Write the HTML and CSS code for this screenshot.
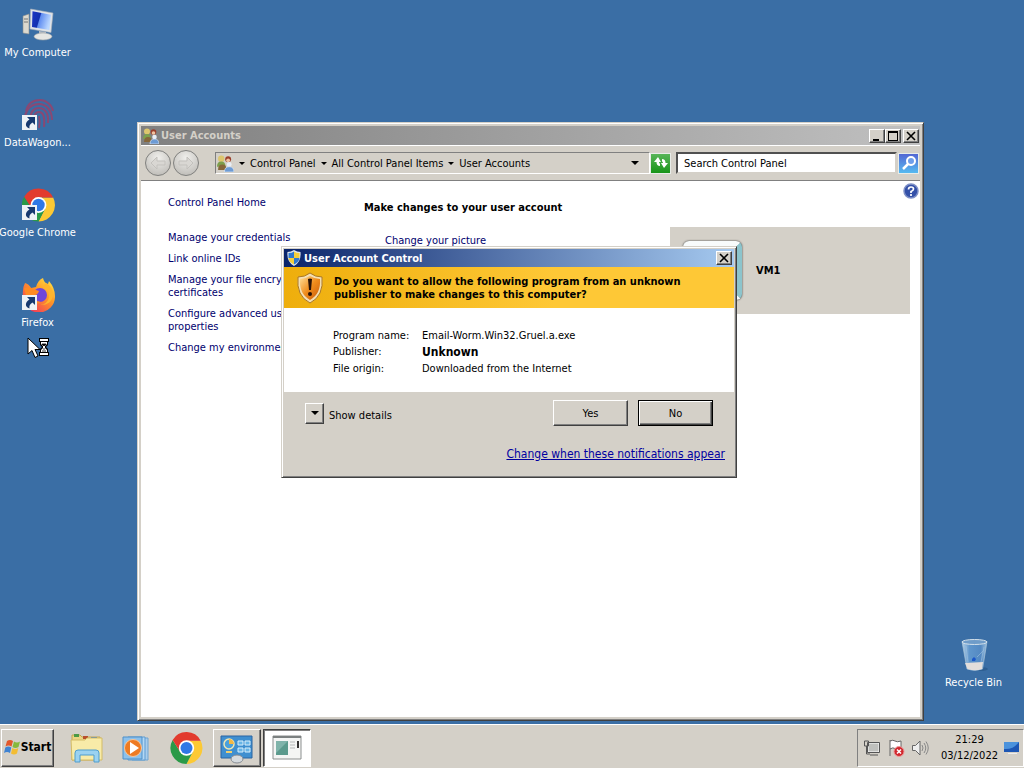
FILE: index.html
```html
<!DOCTYPE html>
<html lang="en">
<head>
    <meta charset="UTF-8">
    <meta name="viewport" content="width=device-width, initial-scale=1.0">
    <title>Desktop</title>
    <link rel="stylesheet" href="styles.css">
</head>
<body>
    <!-- shared drawings -->
    <svg class="defs" aria-hidden="true">
        <defs>
            <linearGradient id="screen" x1="0" y1="0" x2="1" y2="0.3">
                <stop offset="0" stop-color="#1b35c4"/><stop offset="0.45" stop-color="#1230b0"/>
                <stop offset="0.5" stop-color="#5f8cf0"/><stop offset="1" stop-color="#b9d6ff"/>
            </linearGradient>
            <linearGradient id="fox" x1="1" y1="0" x2="0.2" y2="1">
                <stop offset="0" stop-color="#fff04a"/><stop offset="0.45" stop-color="#ff9a26"/><stop offset="1" stop-color="#f0315f"/>
            </linearGradient>
            <linearGradient id="bin" x1="0" y1="0" x2="1" y2="0">
                <stop offset="0" stop-color="#b4d0e6"/><stop offset="0.3" stop-color="#5f96cc"/><stop offset="0.75" stop-color="#5489c2"/><stop offset="1" stop-color="#9fc2de"/>
            </linearGradient>
            <linearGradient id="gold" x1="0" y1="0" x2="1" y2="1">
                <stop offset="0" stop-color="#ffe09a"/><stop offset="0.5" stop-color="#ef8c1c"/><stop offset="1" stop-color="#c85a0c"/>
            </linearGradient>
            <radialGradient id="orb" cx="0.5" cy="0.3" r="0.8">
                <stop offset="0" stop-color="#f0efec"/><stop offset="1" stop-color="#b9b7b2"/>
            </radialGradient>
            <symbol id="chrome" viewBox="0 0 48 48">
                <path d="M24 13H45.300A24 24 0 0 1 24 48L33.500 29.500Z" fill="#fcc934"/>
                <path d="M14.500 29.500 3.200 12A24 24 0 0 0 24 48L33.500 29.500Z" fill="#2a9a48"/>
                <path d="M24 13H45.300A24 24 0 0 0 3.200 12L14.500 29.500Z" fill="#e23b2e"/>
                <circle cx="24" cy="24" r="11.500" fill="#fff"/>
                <circle cx="24" cy="24" r="9" fill="#2f78e6"/>
            </symbol>
            <symbol id="shortcut" viewBox="0 0 15 15">
                <path d="M0 0h15v15H0z" fill="#eef2f6"/>
                <path d="M5 2h8v8l-2.500-2.500C8 9 7 10.500 7.500 13.500 2.500 12 3 7 7.500 4.500Z" fill="#17396f"/>
            </symbol>
            <symbol id="people" viewBox="0 0 16 16">
                <circle cx="4" cy="3.500" r="3" fill="#dcc66e"/>
                <path d="M0 11q0-5 4-5t4 5Z" fill="#7d9f4c"/>
                <circle cx="10.500" cy="4" r="2.800" fill="#9a3f2b"/>
                <circle cx="10.500" cy="5" r="1.800" fill="#efc2a0"/>
                <path d="M1 14q0-5 4-5t4 5Z" fill="#86673a"/>
                <circle cx="11.500" cy="9" r="2.300" fill="#e8eef6"/>
                <path d="M7 16q0-5 4.500-5t4.500 5Z" fill="#6d9bd4" stroke="#e4ecf5" stroke-width="0.600"/>
            </symbol>
        </defs>
    </svg>

    <main class="desktop">
        <nav class="icons">
            <a href="#" class="icon">
                <svg width="34" height="34" viewBox="0 0 34 34">
                    <path d="M2 8 8 6v20l-6-1Z" fill="#dcd9cf" stroke="#8b8d8c" stroke-width="0.600"/>
                    <path d="M3 11h4M3 14h4" stroke="#777"/>
                    <path d="M9.500 1 32 5 30 24.500 9 21Z" fill="#dfe3e8" stroke="#a8afb7" stroke-width="0.600"/>
                    <path d="M11.500 3.200 30 6.700 28.300 22 11 19Z" fill="url(#screen)"/>
                    <path d="m18 23 7 1v4h-7Z" fill="#b9bec4"/>
                    <ellipse cx="22" cy="28.500" rx="9" ry="3.500" fill="#e6e6e3" stroke="#9ea2a6" stroke-width="0.600"/>
                </svg>
                <span>My Computer</span>
            </a>
            <a href="#" class="icon">
                <svg width="34" height="34" viewBox="0 0 34 34">
                    <g fill="none" stroke="#9c4068" stroke-width="2" opacity="0.800">
                        <path d="M5 13C7 5 13 2 19 2s12 5 13 11"/>
                        <path d="M4 18C6 10 11 6 18 6s13 6 13 16"/>
                        <path d="M10 20c-1-6 3-10 8-10s10 4 9 15"/>
                        <path d="M14 24c-2-6 0-10 4-10s6 4 5 15"/>
                        <path d="M18 18c1 4 1 8 0 12"/>
                    </g>
                    <use href="#shortcut" x="1" y="17" width="15" height="15"/>
                </svg>
                <span>DataWagon...</span>
            </a>
            <a href="#" class="icon">
                <svg width="34" height="34" viewBox="0 0 34 34">
                    <use href="#chrome" x="1" y="0" width="33" height="34"/>
                    <use href="#shortcut" x="1" y="17" width="15" height="15"/>
                </svg>
                <span>Google Chrome</span>
            </a>
            <a href="#" class="icon">
                <svg width="34" height="34" viewBox="0 0 34 34">
                    <path d="M4 5q4 1 6 5l5-1Q17 2 22 0q1 5 5 6l1-3q6 7 6 15a16 16 0 0 1-32 1Q1 10 4 5Z" fill="url(#fox)"/>
                    <circle cx="19" cy="17" r="7" fill="#7046d8"/>
                    <path d="M3 10q6-2 9 1l6 2q-1 4-6 5 1 5 8 6-9 5-14-3Z" fill="#ff8a22"/>
                    <path d="M21 9q8 2 7 10-1 7-9 8 12 0 13-10Q32 9 25 5Z" fill="#ffb52c"/>
                    <use href="#shortcut" x="1" y="17" width="15" height="15"/>
                </svg>
                <span>Firefox</span>
            </a>
        </nav>

        <a href="#" class="icon recycle">
            <svg width="34" height="34" viewBox="0 0 34 34">
                <ellipse cx="22" cy="31" rx="9" ry="2" fill="#214f80" opacity="0.500"/>
                <path d="M5 3.500h25L25.500 31q-8 3-15.500 0Z" fill="url(#bin)" stroke="#a9c4da" stroke-width="0.700"/>
                <path d="m8 25 18-1-1 7q-7 2.500-14.500 0Z" fill="#e3dedb"/>
                <ellipse cx="17.500" cy="4" rx="12.500" ry="2.500" fill="#6f9cc9" stroke="#d4e1ea"/>
                <path d="m9 8 2 16M27 9l-3 15M20 19l7-7" stroke="#a5c6e2" stroke-width="0.800" opacity="0.700"/>
                <path d="m15 21 2-2 2 2-1 2h-3Z" fill="#1b57c8"/>
            </svg>
            <span>Recycle Bin</span>
        </a>

        <section class="window accounts">
            <header class="titlebar inactive">
                <svg width="16" height="16"><use href="#people"/></svg>
                <h1>User Accounts</h1>
                <div class="winbtns">
                    <button class="winbtn" aria-label="Minimize"><svg width="12" height="10"><path d="M2 8h6v2H2z"/></svg></button>
                    <button class="winbtn" aria-label="Maximize"><svg width="12" height="10"><path d="M1 0h10v10H1zM2 2v7h8V2z" fill-rule="evenodd"/></svg></button>
                    <button class="winbtn close" aria-label="Close"><svg width="12" height="10"><path d="m2 1 8 8M10 1 2 9" stroke="#000" stroke-width="1.600"/></svg></button>
                </div>
            </header>
            <div class="toolbar">
                <div class="orbs">
                    <button class="orb" aria-label="Back"><svg width="28" height="28"><circle cx="14" cy="14" r="12.500" fill="url(#orb)" stroke="#80807e"/><path d="m13 8-6 6 6 6v-4h8v-4h-8Z" fill="#d9d7d3" stroke="#c3c1bd"/></svg></button>
                    <button class="orb" aria-label="Forward"><svg width="28" height="28"><circle cx="14" cy="14" r="12.500" fill="url(#orb)" stroke="#80807e"/><path d="m15 8 6 6-6 6v-4H7v-4h8Z" fill="#d9d7d3" stroke="#c3c1bd"/></svg></button>
                </div>
                <div class="address">
                    <svg width="17" height="17"><use href="#people"/></svg>
                    <i class="arrow"></i><a href="#">Control Panel</a>
                    <i class="arrow"></i><a href="#">All Control Panel Items</a>
                    <i class="arrow"></i><a href="#">User Accounts</a>
                    <button class="history" aria-label="Previous locations"><i class="arrow big"></i></button>
                </div>
                <button class="refresh" aria-label="Refresh"><svg width="18" height="18"><path d="M6 3 2 8h2.500q0 4 3.500 4V9.500q-1 0-1-1.500H9Z M12 14l4-5h-2.500q0-4-3.500-4v2.500q1 0 1 1.500H9Z" fill="#fff"/></svg></button>
                <input class="search" type="text" aria-label="Search" placeholder="Search Control Panel">
                <button class="find" aria-label="Find"><svg width="18" height="18"><circle cx="11" cy="7" r="4" fill="#6f9eea" stroke="#fff" stroke-width="2"/><path d="m8 10-5 5" stroke="#fff" stroke-width="2.500"/></svg></button>
            </div>
            <div class="content">
                <nav class="tasks">
                    <a href="#" class="home">Control Panel Home</a>
                    <a href="#">Manage your credentials</a>
                    <a href="#">Link online IDs</a>
                    <a href="#">Manage your file encryption certificates</a>
                    <a href="#">Configure advanced user profile properties</a>
                    <a href="#">Change my environment variables</a>
                </nav>
                <div class="account">
                    <button class="help" aria-label="Help"><svg width="16" height="16"><circle cx="8" cy="8" r="7" fill="#3350a8" stroke="#7d8fc6" stroke-width="1.500"/><path d="M5.500 6.500Q5.500 4 8 4t2.500 2q0 1.500-2.500 2.500v1.500M8 11v2" fill="none" stroke="#fff" stroke-width="1.700"/></svg></button>
                    <h2>Make changes to your user account</h2>
                    <div class="row">
                        <a href="#">Change your picture</a>
                        <div class="user">
                            <div class="photo"></div>
                            <strong>VM1</strong>
                        </div>
                    </div>
                </div>
            </div>
        </section>

        <section class="window uac" role="dialog">
            <header class="titlebar active">
                <svg width="16" height="16" viewBox="0 0 16 16">
                    <path d="M8 0q3 2 6.500 2 1 10-6.500 14Q.500 12 1.500 2 5 2 8 0Z" fill="#dfe7ee"/>
                    <path d="M8 1.500v6.500H2.500V3q3.500 0 5.500-1.500Z" fill="#2f78cf"/><path d="M8 1.500Q10 3 13.500 3v5H8Z" fill="#f4cf3a"/>
                    <path d="M2.500 8H8v6.500Q3 12 2.500 8Z" fill="#f4cf3a"/><path d="M8 8h5.500q-.500 4-5.500 6.500Z" fill="#2f78cf"/>
                </svg>
                <h1>User Account Control</h1>
                <button class="winbtn" aria-label="Close"><svg width="12" height="10"><path d="m2 1 8 8M10 1 2 9" stroke="#000" stroke-width="1.600"/></svg></button>
            </header>
            <div class="banner">
                <svg width="28" height="32" viewBox="0 0 28 32">
                    <path d="M14 1q5 4 12 4 2 19-12 26Q0 24 2 5q7 0 12-4Z" fill="#f3dfb4" stroke="#a97726"/>
                    <path d="M14 4q5 3 10 3 1 15-10 21Q3 22 4 7q5 0 10-3Z" fill="url(#gold)"/>
                    <path d="M12 7q2-1 4 0l-1 11h-2Z" fill="#2a1206"/><circle cx="14" cy="22" r="2" fill="#2a1206"/>
                </svg>
                <p>Do you want to allow the following program from an unknown publisher to make changes to this computer?</p>
            </div>
            <dl class="facts">
                <dt>Program name:</dt><dd>Email-Worm.Win32.Gruel.a.exe</dd>
                <dt>Publisher:</dt><dd><strong>Unknown</strong></dd>
                <dt>File origin:</dt><dd>Downloaded from the Internet</dd>
            </dl>
            <footer class="actions">
                <div class="choices">
                    <button class="expand" id="details" aria-labelledby="details-label"><i class="arrow big"></i></button>
                    <label for="details" id="details-label">Show details</label>
                    <button class="push">Yes</button>
                    <button class="push default">No</button>
                </div>
                <a href="#">Change when these notifications appear</a>
            </footer>
        </section>

        <svg class="cursor" width="24" height="22" viewBox="0 0 24 22">
            <path d="M1 1v16l4-3.500 3 7 3-1.500-3-6.500h5Z" fill="#fff" stroke="#000"/>
            <path d="M12 1h10v4h-1v3l-2 2 2 2v3h1v4H12v-4h1v-3l2-2-2-2V5h-1Z" fill="#000"/>
            <path d="M13 2h8v2h-8zM13 16h8v2h-8zM14 5h6v2l-2 2v2l2 2v2h-6v-2l2-2V9l-2-2Z" fill="#fff"/>
            <path d="M15 7h4l-2 2Z M17 11v2M15 14h4" stroke="#000" stroke-width="0.800"/>
        </svg>
    </main>

    <footer class="taskbar">
        <button class="start">
            <svg width="17" height="17" viewBox="0 0 17 17">
                <path d="M3 2q3-2 6 0L7.500 7.500q-3-2-6 0Z" fill="#e2572a"/><path d="M10 2.500q3 2 6 0L14.500 8q-3 2-6 0Z" fill="#86b93c"/>
                <path d="M1.300 8.500q3-2 6 0L6 14q-3-2-6 0Z" fill="#3f83d2"/><path d="M8.300 9q3 2 6 0L13 14.500q-3 2-6 0Z" fill="#f3bd33"/>
            </svg>
            Start
        </button>
        <div class="pinned">
            <button aria-label="Explorer"><svg width="34" height="32" viewBox="0 0 34 32">
                <path d="M2 3h8l2 2h18v23H2Z" fill="#ecd683" stroke="#c3a654"/>
                <path d="M4 2h5v3H4z" fill="#4c9a45"/><path d="M13 4h5v3h-5z" fill="#b9502d"/><path d="M21 5h6v3h-6z" fill="#3f7ec1"/>
                <path d="M1 8h14l2-2h15v22H2Z" fill="#f8eba8" stroke="#d3bb66"/>
                <path d="M5 30V21q0-3 3-3h18q3 0 3 3v9h-5v-7H10v7Z" fill="#9bd2f0" stroke="#4f9dce"/>
            </svg></button>
            <button aria-label="Media Player"><svg width="34" height="32" viewBox="0 0 34 32">
                <path d="M12 6h16v22H12Z" fill="#a9cdec" stroke="#6fa4d2"/><path d="M8 5h17v23H8Z" fill="#b4d8f4" stroke="#5e9bd0"/>
                <path d="M3 5h19v22H3Z" fill="#8cc1ec" stroke="#4e90c9"/>
                <circle cx="13" cy="16" r="8.500" fill="#ee7b23" stroke="#f6c79c"/><path d="m10 10 9 6-9 6Z" fill="#fff"/>
            </svg></button>
            <button aria-label="Chrome"><svg width="34" height="32"><use href="#chrome" width="33" height="32"/></svg></button>
        </div>
        <button class="task" aria-label="User Accounts"><svg width="34" height="32" viewBox="0 0 34 32">
            <path d="M1 4h31v22H1Z" fill="#3f8fd0" stroke="#2a65a2"/>
            <circle cx="9" cy="12" r="5" fill="#4aa0dc" stroke="#f0e7b4" stroke-width="1.500"/><path d="M9 12V7a5 5 0 0 1 5 5Z" fill="#f3b843"/>
            <path d="M18 9h5v4h-5zM25 9h5v4h-5zM18 16h5v4h-5zM25 16h5v4h-5z" fill="#68b4e6" stroke="#d9effb"/>
            <path d="M6 20h6" stroke="#f0d070" stroke-width="2"/>
            <ellipse cx="17" cy="27" rx="6" ry="4" fill="#d5dade" stroke="#858b92"/>
        </svg></button>
        <button class="task pressed" aria-label="User Account Control"><svg width="34" height="32" viewBox="0 0 34 32">
            <path d="M3 4h28v23H3Z" fill="#f4f5f4" stroke="#8c8f8f"/><path d="M3 5h28" stroke="#7b8080" stroke-width="2"/>
            <path d="M6 9h12v14H6z" fill="#5b9a8d"/><path d="M6 9h12L6 21Z" fill="#7fb3aa"/>
            <path d="M20 10h5M20 13h5M20 16h5" stroke="#b5b9b9"/><path d="M28 9v7" stroke="#333" stroke-width="2"/>
        </svg></button>
        <div class="tray">
            <svg width="18" height="18" viewBox="0 0 18 18"><path d="M5 4h11v9H5Z" fill="#bfc0bd" stroke="#fff"/><path d="M4.500 3.500h12v10h-12ZM7 16h8M1.500 2v5h4V2ZM3.500 7v8H7" fill="none" stroke="#555"/></svg>
            <svg width="18" height="18" viewBox="0 0 18 18"><path d="M3 17V1M3 2q3-1.500 5 0t6 0v8q-4 1-6-.500t-5 .500" fill="#fff" stroke="#666"/><circle cx="12" cy="12.500" r="5" fill="#d0282e" stroke="#e99"/><path d="m10 10.500 4 4M14 10.500l-4 4" stroke="#fff" stroke-width="1.500"/></svg>
            <svg width="18" height="18" viewBox="0 0 18 18"><path d="M1.500 6.500h3L9 2v14l-4.500-4.500h-3Z" fill="#eee" stroke="#666"/><path d="M11 6q2 3 0 6M13 4q3.500 5 0 10M15 2.500q4.500 6.500 0 13" fill="none" stroke="#888"/></svg>
            <div class="clock"><time>21:29</time><time>03/12/2022</time></div>
            <svg width="16" height="14" viewBox="0 0 16 14"><path d="M0 1h15v10H0Z" fill="#1d56b4"/><path d="M0 1h15Q9 9 0 8Z" fill="#4b92dc"/><path d="M4 12h9v1H4z" fill="#eee"/></svg>
        </div>
    </footer>
</body>
</html>
```
FILE: styles.css
```css
* {
    box-sizing: border-box;
}
body {
    margin: 0;
    height: 100vh;
    display: flex;
    flex-direction: column;
    overflow: hidden;
    background-color: #3a6ea5;
    color: #000;
    font-family: "DejaVu Sans Condensed", "DejaVu Sans", sans-serif;
    font-size: 11px;
    line-height: 13px;
}
h1, h2, p, dl, dd {
    margin: 0;
    font-size: 11px;
}
button, input {
    font: inherit;
    color: inherit;
    padding: 0;
    border: 0;
    background: none;
}
a {
    color: #00006e;
    text-decoration: none;
}
svg {
    display: block;
    flex: none;
}
.defs {
    position: absolute;
    width: 0;
    height: 0;
}

/* desktop */
.desktop {
    flex: 1;
    position: relative;
}
.icons {
    width: 75px;
    padding-top: 8px;
    display: flex;
    flex-direction: column;
    gap: 36px;
}
.icon {
    display: flex;
    flex-direction: column;
    align-items: center;
    gap: 4px;
    height: 54px;
    color: #fff;
    white-space: nowrap;
}
.recycle {
    position: absolute;
    right: 13px;
    bottom: 32px;
    width: 75px;
}
.cursor {
    position: absolute;
    left: 27px;
    top: 337px;
}

/* windows */
.window {
    position: absolute;
    display: flex;
    flex-direction: column;
    padding: 2px;
    background-color: #d4d0c8;
    border: 1px solid;
    border-color: #d4d0c8 #404040 #404040 #d4d0c8;
    box-shadow: inset 1px 1px #fff, inset -1px -1px #808080;
}
.accounts {
    left: 137px;
    right: 100px;
    top: 122px;
    bottom: 3px;
    padding: 3px;
}
.titlebar {
    display: flex;
    align-items: center;
    gap: 2px;
    height: 18px;
    padding: 0 2px;
    color: #fff;
}
.titlebar h1 {
    flex: 1;
}
.inactive {
    height: 19px;
    padding-right: 1px;
    background: linear-gradient(to right, #808080, #c0c0c0);
    color: #d4d0c8;
}
.active {
    background: linear-gradient(to right, #0a246a, #a6caf0);
}
.winbtns {
    display: flex;
}
.winbtn, .expand, .push {
    background-color: #d4d0c8;
    border: 1px solid;
    border-color: #fff #404040 #404040 #fff;
    box-shadow: inset -1px -1px #808080;
}
.winbtn {
    width: 16px;
    height: 14px;
    display: grid;
    place-items: center;
}
.close {
    margin-left: 2px;
}
.toolbar {
    display: flex;
    align-items: center;
    height: 36px;
    padding: 0 1px 0 3px;
    border-top: 1px solid #fff;
    border-bottom: 1px solid #808080;
}
.orbs {
    display: flex;
    margin-right: 15px;
}
.orb {
    width: 28px;
}
.address {
    flex: 1;
    display: flex;
    align-items: center;
    gap: 5px;
    height: 22px;
    padding-left: 1px;
    border: 1px solid;
    border-color: #808080 #fff #fff #808080;
}
.address a {
    color: #000;
}
.arrow {
    border: 3px solid transparent;
    border-top-color: #000;
    border-bottom: 0;
}
.big {
    border-width: 4px;
    border-bottom: 0;
}
.history {
    display: flex;
    margin-left: auto;
    padding: 8px 10px;
}
.refresh, .find {
    width: 21px;
    height: 21px;
    display: grid;
    place-items: center;
    border: 1px solid #e8ece8;
}
.refresh {
    background: linear-gradient(#58b558, #189418);
    margin-right: 5px;
}
.find {
    background: linear-gradient(#5468d4, #55baf0);
    margin-left: 1px;
}
.search {
    width: 221px;
    height: 22px;
    padding: 0 6px;
    background-color: #fff;
    border: 2px solid;
    border-color: #505050 #d4d0c8 #d4d0c8 #505050;
}
.search::placeholder {
    color: #000;
    opacity: 1;
}
.content {
    flex: 1;
    display: flex;
    background-color: #fff;
}
.tasks {
    width: 210px;
    padding: 15px 0 0 27px;
    display: flex;
    flex-direction: column;
    gap: 8px;
}
.home {
    margin-bottom: 14px;
}
.account {
    flex: 1;
    padding: 2px 1px 0 13px;
}
.account h2 {
    margin-top: 2px;
}
.help {
    display: block;
    margin-left: auto;
}
.row {
    display: flex;
    justify-content: space-between;
    margin: 13px 9px 0 21px;
}
.row > a {
    padding-top: 7px;
}
.user {
    display: flex;
    align-items: center;
    gap: 14px;
    width: 240px;
    height: 87px;
    padding-left: 13px;
    background-color: #d4d0c8;
}
.photo {
    width: 59px;
    height: 59px;
    border: 5px solid #f8fbfb;
    border-right-color: #8cc4cc;
    border-radius: 6px;
    background-color: #3f9cac;
    box-shadow: 0 0 2px #222;
}

/* dialog */
.uac {
    left: 281px;
    top: 246px;
    width: 456px;
}
.banner {
    display: flex;
    align-items: center;
    gap: 10px;
    padding: 5px 40px 4px 12px;
    background: linear-gradient(to right, #eeae0c, #fec836 60%);
}
.banner p {
    font-weight: bold;
}
.facts {
    display: grid;
    grid-template-columns: 89px 1fr;
    line-height: 16px;
    padding: 20px 49px 15px;
    background-color: #fff;
}
.facts strong {
    font-size: 12px;
}
.actions {
    padding: 8px 9px 14px 21px;
    display: flex;
    flex-direction: column;
    gap: 22px;
}
.choices {
    display: flex;
    align-items: center;
    gap: 10px;
    padding-right: 12px;
}
.choices label {
    flex: 1;
    margin-left: -5px;
    padding-top: 5px;
}
.actions > a {
    align-self: flex-end;
    color: #0000a0;
    font-size: 12px;
    text-decoration: underline;
}
.expand {
    width: 19px;
    height: 21px;
    display: grid;
    place-items: center;
}
.push {
    width: 75px;
    height: 26px;
}
.default {
    border-color: #000;
    box-shadow: inset 1px 1px #fff, inset -1px -1px #404040, inset -2px -2px #808080;
}

/* taskbar */
.taskbar {
    display: flex;
    align-items: center;
    height: 44px;
    padding: 2px 0 0 1px;
    background-color: #d4d0c8;
    border-top: 1px solid #fff;
}
.start, .task {
    height: 38px;
    display: flex;
    align-items: center;
    justify-content: center;
    border: 1px solid;
    border-color: #fff #404040 #404040 #fff;
    box-shadow: inset -1px -1px #808080;
}
.start {
    width: 53px;
    font-size: 12px;
    font-weight: bold;
}
.pinned {
    display: flex;
    gap: 16px;
    margin: 0 9px 0 16px;
}
.task {
    width: 48px;
    margin-right: 2px;
}
.pressed {
    background-color: #fff;
    border-color: #404040 #fff #fff #404040;
    box-shadow: inset 1px 1px #808080;
}
.tray {
    display: flex;
    align-items: center;
    gap: 6px;
    height: 38px;
    margin-left: auto;
    padding: 0 3px 0 5px;
    border: 1px solid;
    border-color: #808080 #fff #fff #808080;
}
.clock {
    display: flex;
    flex-direction: column;
    line-height: 16px;
    text-align: center;
    margin-left: 6px;
}
```
